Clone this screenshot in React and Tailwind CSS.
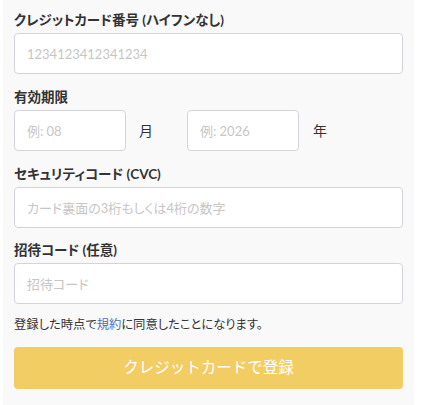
import React from 'react';

const font = { fontFamily: 'Lato, "Noto Sans CJK JP", sans-serif' };

const inputCls =
  'h-[41px] rounded-[4px] border border-[#d3d3de] bg-white px-3 text-[13px] text-[#333] placeholder:text-[#c6c6c6] outline-none';

const Label = ({ children }) => (
  <div className="mb-[3px] h-5 text-[13.5px] font-bold leading-5 text-[#333]">{children}</div>
);

export default function App() {
  return (
    <div className="min-h-[405px] bg-white" style={font}>
      <div className="ml-[3px] min-h-[405px] w-[411px] bg-[#f9f9f9] px-[11px] pt-[10px] [font-feature-settings:'palt']">
        <Label>クレジットカード番号 (ハイフンなし)</Label>
        <input className={`${inputCls} w-full`} placeholder="1234123412341234" />

        <div className="mt-[13px]">
          <Label>有効期限</Label>
          <div className="flex items-center">
            <input className={`${inputCls} w-[112px]`} placeholder="例: 08" />
            <span className="ml-[13px] w-[48px] text-[14px] text-[#333]">月</span>
            <input className={`${inputCls} w-[112px]`} placeholder="例: 2026" />
            <span className="ml-[14px] text-[14px] text-[#333]">年</span>
          </div>
        </div>

        <div className="mt-[13px]">
          <Label>セキュリティコード (CVC)</Label>
          <input className={`${inputCls} w-full`} placeholder="カード裏面の3桁もしくは4桁の数字" />
        </div>

        <div className="mt-[12px]">
          <Label>招待コード (任意)</Label>
          <input className={`${inputCls} w-full`} placeholder="招待コード" />
        </div>

        <p className="mt-[11px] h-5 text-[12.3px] leading-5 text-[#333]">
          登録した時点で<a className="text-[#4f6fb3]">規約</a>に同意したことになります。
        </p>

        <button className="mt-[12px] h-[42px] w-full rounded-[4px] bg-[#f2cd64] text-[15.5px] text-white [font-feature-settings:normal]">
          クレジットカードで登録
        </button>
      </div>
    </div>
  );
}
